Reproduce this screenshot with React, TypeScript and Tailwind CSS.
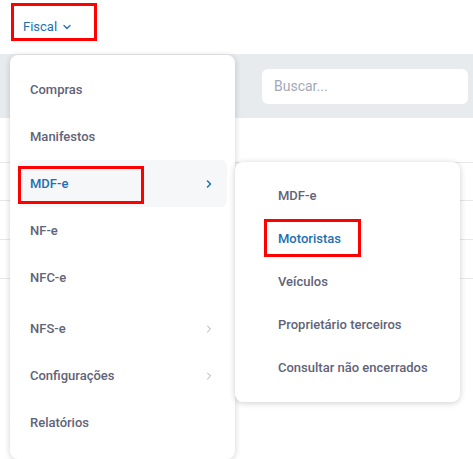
import { ChevronDown, ChevronRight } from "lucide-react";

const mainItems = [
  { label: "Compras" },
  { label: "Manifestos" },
  { label: "MDF-e", active: true, sub: true },
  { label: "NF-e" },
  { label: "NFC-e" },
  { label: "NFS-e", sub: true, gap: true },
  { label: "Configurações", sub: true },
  { label: "Relatórios" },
];

const subItems = ["MDF-e", "Motoristas", "Veículos", "Proprietário terceiros", "Consultar não encerrados"];

export default function App() {
  return (
    <div className="relative w-[473px] h-[459px] overflow-hidden bg-white font-['Roboto',sans-serif]">
      {/* Top bar */}
      <div className="h-[54px] flex items-center px-[23px]">
        <button className="flex items-center gap-1 text-[13px] text-[#1c6fb3]">
          Fiscal <ChevronDown size={12} strokeWidth={2.5} />
        </button>
      </div>

      {/* Filter band */}
      <div className="h-[64px] bg-[#e8ebed] flex items-center justify-end pr-[5px]">
        <div className="w-[206px] h-[35px] bg-white rounded-md flex items-center px-3 text-[14px] text-[#a3a9b8]">
          Buscar...
        </div>
      </div>

      {/* Table rows behind */}
      <div className="h-[44px]" />
      <div className="border-t border-[#e6e8eb] h-[38px]" />
      <div className="border-t border-[#e6e8eb] h-[39px]" />
      <div className="border-t border-[#e6e8eb] h-[39px]" />
      <div className="border-t border-[#e6e8eb]" />

      {/* Annotation around Fiscal */}
      <div className="absolute left-[11px] top-[3px] w-[86px] h-[38px] border-[3px] border-[#ff0000]" />

      {/* Main dropdown */}
      <div className="absolute left-[10px] top-[55px] w-[225px] h-[404px] bg-white rounded-lg shadow-[0_1px_6px_rgba(0,0,0,0.18)] pt-[11px] px-[8px] flex flex-col">
        {mainItems.map((it) => (
          <div
            key={it.label}
            className={`h-[47px] shrink-0 flex items-center justify-between pl-[12px] pr-[12px] rounded-md ${
              it.gap ? "mt-[4px]" : ""
            } ${it.active ? "bg-[#f6f7f8] text-[#1c6fb3]" : "text-[#5f6378]"}`}
          >
            <span className="text-[13px] font-medium">{it.label}</span>
            {it.sub && (
              <ChevronRight
                size={12}
                strokeWidth={it.active ? 3 : 2}
                className={it.active ? "text-[#1c6fb3]" : "text-[#a7abb5]"}
              />
            )}
          </div>
        ))}
      </div>

      {/* Annotation around MDF-e */}
      <div className="absolute left-[18px] top-[166px] w-[126px] h-[38px] border-[3px] border-[#ff0000]" />

      {/* Submenu */}
      <div className="absolute left-[235px] top-[162px] w-[225px] h-[240px] bg-white rounded-lg shadow-[0_1px_6px_rgba(0,0,0,0.2)] pt-[12px] flex flex-col">
        {subItems.map((s, i) => (
          <div
            key={s}
            className={`h-[43px] flex items-center pl-[43px] text-[13px] font-medium ${
              i === 1 ? "text-[#1c6fb3]" : "text-[#5f6378]"
            }`}
          >
            {s}
          </div>
        ))}
      </div>

      {/* Annotation around Motoristas */}
      <div className="absolute left-[264px] top-[219px] w-[97px] h-[38px] border-[3px] border-[#ff0000]" />
    </div>
  );
}
